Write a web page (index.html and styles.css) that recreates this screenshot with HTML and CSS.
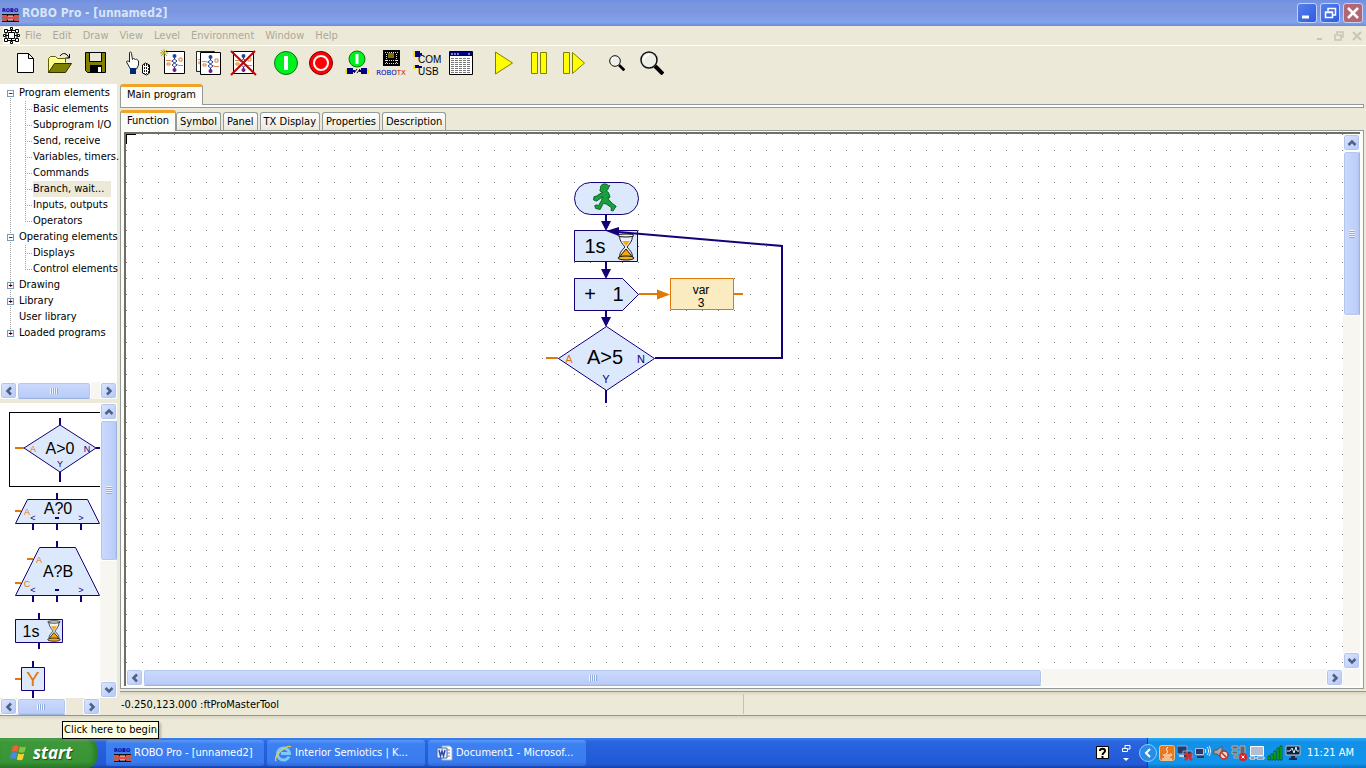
FILE: index.html
```html
<!DOCTYPE html>
<html lang="en">
<head>
<meta charset="utf-8">
<title>ROBO Pro - [unnamed2]</title>
<link rel="stylesheet" href="styles.css">
</head>
<body>
<svg class="defs" aria-hidden="true">
  <defs>
    <symbol id="robo" viewBox="0 0 17 17">
      <text x="0" y="7" class="robo-word">ROBO</text>
      <rect x="0" y="9" width="17" height="8" fill="#111"/>
      <path d="M0 11h4l3 3h3l3-3h4M0 15h4l3-3h3l3 3h4" fill="none" stroke="#e05048" stroke-width="2"/>
      <path d="M0 13h4M6 11h5M6 15h5M13 13h4" stroke="#f6d8d0"/>
    </symbol>
    <symbol id="page" viewBox="0 0 21 23">
      <path d="M.5 .5h20v22h-20z" fill="#fff" stroke="#000"/>
      <path d="M10.500 4v17" stroke="#101060"/>
      <circle cx="10.500" cy="5" r="2" fill="#204890"/>
      <path d="M8 10l2.500-2 2.500 2-2.500 2zM8 14l2.500-2 2.500 2-2.500 2z" fill="#fff" stroke="#2040a0"/>
      <path d="M2 9.500h4l2 1M13 13.500l2 1h4M15 7h3v3h-3zM3 12h3v2H3z" fill="none" stroke="#e08030"/>
      <circle cx="10.500" cy="19" r="2" fill="#702080"/>
    </symbol>
    <symbol id="plug" viewBox="0 0 24 8">
      <path d="M0 2h4v5H0zM20 2h4v5h-4z" fill="#ffe800"/>
      <path d="M2 1h6v2h2v2H8v2H2zM16 1h6v6h-6V5h-2V3h2z" fill="#000080"/>
      <path d="M9 6l3-4M12 6l3-4" stroke="#000"/>
    </symbol>
    <symbol id="glass" viewBox="0 0 20 28">
      <path d="M3.500 3c0 5 3 8 5.500 11-2.500 3-5.500 5-5.500 10h13c0-5-3-7-5.500-10 2.500-3 5.500-6 5.500-11z" fill="#eef3fa" stroke="#222"/>
      <path d="M6 8h8l-4 5z" fill="#f5a810"/>
      <path d="M10 16l5 6 1 3H4l1-3z" fill="#f5a810" stroke="#111"/>
      <ellipse cx="10" cy="2.500" rx="8" ry="1.500" fill="#eef3fa" stroke="#111"/>
      <ellipse cx="10" cy="25" rx="8" ry="2" fill="#f5b020" stroke="#111"/>
    </symbol>
    <symbol id="lens" viewBox="0 0 24 24">
      <path d="M15 15l8 8" stroke="#000" stroke-width="4"/>
      <circle cx="9" cy="9" r="8" fill="#efefe8" stroke="#111" stroke-width="1.500"/>
      <path d="M4 9a5 5 0 0 1 5-5" fill="none" stroke="#fff" stroke-width="2"/>
    </symbol>
    <symbol id="chev" viewBox="0 0 10 10">
      <path d="M1.500 7l3.500-3.500L8.500 7" fill="none" stroke="#4d6185" stroke-width="2.500"/>
    </symbol>
    <pattern id="grid" width="16" height="16" patternUnits="userSpaceOnUse">
      <rect x="0" y="0" width="1" height="1" fill="#777"/>
    </pattern>
  </defs>
</svg>

<header class="titlebar">
  <svg class="i17"><use href="#robo"/></svg>
  <h1>ROBO Pro - [unnamed2]</h1>
  <div class="winbtns">
    <button aria-label="Minimize"><svg viewBox="0 0 18 18"><path d="M4 13h7" stroke="#fff" stroke-width="3"/></svg></button>
    <button aria-label="Restore"><svg viewBox="0 0 18 18"><path d="M7 7V4.500h7.500V11H12M4.500 8.500h7v5h-7zM4 8h8" fill="none" stroke="#fff" stroke-width="1.500"/></svg></button>
    <button class="close" aria-label="Close"><svg viewBox="0 0 18 18"><path d="M4 4l10 10M14 4L4 14" stroke="#fff" stroke-width="2.500"/></svg></button>
  </div>
</header>

<nav class="menubar">
  <svg class="i17" viewBox="0 0 17 17"><path d="M0 0h17v17H0z" fill="#fff"/><path d="M5.500 5.500h6v6h-6zM3 3.500h11v10H3zM8.500 2v3M8.500 12v3M2 8.500h3M12 8.500h3" fill="none" stroke="#000"/><path d="M1.500 2.500h3v3h-3zM12.500 2.500h3v3h-3zM1.500 11.500h3v3h-3zM12.500 11.500h3v3h-3zM7.500 .5h2v2h-2zM7.500 14.500h2v2h-2zM.5 7.500h2v2h-2zM14.500 7.500h2v2h-2z" fill="#fff" stroke="#000"/></svg>
  <button>File</button><button>Edit</button><button>Draw</button><button>View</button><button>Level</button><button>Environment</button><button>Window</button><button>Help</button>
  <div class="mdibtns">
    <button aria-label="Minimize document"><svg viewBox="0 0 10 10"><path d="M1 8h5" stroke="#c9c5b4" stroke-width="2"/></svg></button>
    <button aria-label="Restore document"><svg viewBox="0 0 10 10"><path d="M3 3V1h6v5H7M1 4h6v5H1z" fill="none" stroke="#c9c5b4" stroke-width="1.500"/></svg></button>
    <button aria-label="Close document"><svg viewBox="0 0 10 10"><path d="M1 1l8 8M9 1L1 9" stroke="#c9c5b4" stroke-width="2"/></svg></button>
  </div>
</nav>

<div class="toolbar" role="toolbar">
  <div class="group">
    <button aria-label="New"><svg viewBox="0 0 30 30"><path d="M7.500 5.500h11l5 5v14h-16z" fill="#fff" stroke="#000"/><path d="M18.500 5.500v5h5" fill="none" stroke="#000"/></svg></button>
    <button aria-label="Open"><svg viewBox="0 0 30 30"><path d="M3.500 24.500v-14l2-2h5l2 2h8v4" fill="#ffff90" stroke="#606000"/><path d="M3.500 24.500l6-9h17l-6 9z" fill="#808000" stroke="#303000"/><path d="M15 8c3-4 7-3 9 2M20.500 10h4V6" fill="none" stroke="#000"/></svg></button>
    <button aria-label="Save"><svg viewBox="0 0 30 30"><path d="M5.500 4.500h20v20h-18l-2-2z" fill="#808000" stroke="#000"/><path d="M9.500 4.500h12v9h-12z" fill="#ece9d8" stroke="#000"/><path d="M10 17h12v8H10z" fill="#000"/><path d="M18 19h3v5h-3z" fill="#fff"/></svg></button>
  </div>
  <div class="group">
    <button aria-label="Hand tool"><svg viewBox="0 0 30 30"><path d="M6.500 4.500c1-1 2-.5 2 1l1 6 1-1 2 1 1-.5 2 2v4l-2 4h-6l-4-7c0-1 1.500-1.500 3 0z" fill="#fff" stroke="#222"/><path d="M7 20h6v6H7z" fill="#002878"/><path d="M19.500 17l3-2 4 2v8l-3 2-4-2z" fill="#fff" stroke="#000"/><path d="M21.500 16v10M23.500 16v10M25.500 17v8" stroke="#222" stroke-dasharray="2 1"/></svg></button>
    <button aria-label="New subprogram"><svg viewBox="0 0 30 30"><use href="#page" x="6" y="3" width="21" height="23"/><path d="M3 2l6 6M9 2L3 8M6 1v8M2 5h8" stroke="#b4a820"/></svg></button>
    <button aria-label="Copy subprogram"><svg viewBox="0 0 30 30"><use href="#page" x="3" y="3" width="19" height="21"/><use href="#page" x="7" y="4" width="21" height="23"/></svg></button>
    <button aria-label="Delete subprogram"><svg viewBox="0 0 30 30"><use href="#page" x="5" y="3" width="21" height="23"/><path d="M3 3l25 24M27 3L3 27" stroke="#b80808" stroke-width="2"/></svg></button>
  </div>
  <div class="group">
    <button aria-label="Start online"><svg viewBox="0 0 30 30"><circle cx="15" cy="15" r="11.500" fill="#00f020" stroke="#087808"/><path d="M15 8v14" stroke="#fff" stroke-width="4"/></svg></button>
    <button aria-label="Stop"><svg viewBox="0 0 30 30"><circle cx="15" cy="15" r="11.500" fill="#f00" stroke="#780000"/><circle cx="15" cy="15" r="7" fill="none" stroke="#fff" stroke-width="2"/></svg></button>
    <button aria-label="Download"><svg viewBox="0 0 30 30"><circle cx="16" cy="11" r="8" fill="#00f020" stroke="#087808"/><path d="M16 6v10" stroke="#fff" stroke-width="3"/><use href="#plug" x="4" y="19" width="24" height="8"/></svg></button>
    <button aria-label="ROBO TX"><svg viewBox="0 0 30 30"><path d="M7 2h17v16H7z"/><path d="M9 4.500h13M9 15.500h13M10.500 6v9M20.500 6v9M9 12.500h13" stroke="#ddd" stroke-dasharray="1 1"/><path d="M12 5h6v5h-6z" fill="#807000"/><text x="15" y="27" class="tx-word">ROBO<tspan fill="#d01010">TX</tspan></text></svg></button>
    <button aria-label="COM/USB"><svg viewBox="0 0 30 30"><path d="M2 3h3v6H2zM2 17h3v4H2z" fill="#ffe800"/><path d="M4 3h5v2h2v2H9v2H4zM4 17h4v1h3v2H4z" fill="#000080"/><text x="7" y="15" class="com-word">COM</text><text x="7" y="27" class="com-word">USB</text></svg></button>
    <button aria-label="Table"><svg viewBox="0 0 30 30"><path d="M3.500 3.500h23v23h-23z" fill="#fff" stroke="#000"/><path d="M4 4h22v4H4z" fill="#000080"/><path d="M5 6h9M22 6h3" stroke="#fff" stroke-dasharray="2 1"/><path d="M5 10.500h20M5 12.500h20M5 14.500h20M5 16.500h20M5 18.500h20M5 20.500h20M5 22.500h20M5 24.500h20" stroke="#777" stroke-dasharray="3 1"/></svg></button>
  </div>
  <div class="group">
    <button aria-label="Run"><svg viewBox="0 0 30 30"><path d="M6.500 4v22l17-11z" fill="#ff0" stroke="#808000"/></svg></button>
    <button aria-label="Pause"><svg viewBox="0 0 30 30"><path d="M7.500 4.500h6v21h-6zM16.500 4.500h6v21h-6z" fill="#ff0" stroke="#808000"/></svg></button>
    <button aria-label="Step"><svg viewBox="0 0 30 30"><path d="M4.500 4.500h6v21h-6zM13.500 4.500v21l12-10.500z" fill="#ff0" stroke="#808000"/></svg></button>
  </div>
  <div class="group">
    <button aria-label="Zoom out"><svg viewBox="0 0 30 30"><use href="#lens" x="7" y="7" width="16" height="16"/></svg></button>
    <button aria-label="Zoom in"><svg viewBox="0 0 30 30"><use href="#lens" x="3" y="3" width="24" height="24"/></svg></button>
  </div>
</div>

<main class="work">
  <aside class="side">
    <div class="treebox">
      <ul class="tree">
        <li><span class="row"><i class="box">−</i>Program elements</span>
          <ul>
            <li><span class="row">Basic elements</span></li>
            <li><span class="row">Subprogram I/O</span></li>
            <li><span class="row">Send, receive</span></li>
            <li><span class="row">Variables, timers.</span></li>
            <li><span class="row">Commands</span></li>
            <li><span class="row"><span class="sel">Branch, wait...</span></span></li>
            <li><span class="row">Inputs, outputs</span></li>
            <li><span class="row">Operators</span></li>
          </ul></li>
        <li><span class="row"><i class="box">−</i>Operating elements</span>
          <ul>
            <li><span class="row">Displays</span></li>
            <li><span class="row">Control elements</span></li>
          </ul></li>
        <li><span class="row"><i class="box">+</i>Drawing</span></li>
        <li><span class="row"><i class="box">+</i>Library</span></li>
        <li><span class="row"><i class="box none"></i>User library</span></li>
        <li><span class="row"><i class="box">+</i>Loaded programs</span></li>
      </ul>
      <div class="sb h">
        <button aria-label="Scroll left"><svg class="left"><use href="#chev"/></svg></button>
        <div class="track"><div class="thumb tree-thumb"></div></div>
        <button aria-label="Scroll right"><svg class="right"><use href="#chev"/></svg></button>
      </div>
    </div>
    <div class="palette">
      <svg class="shapes" viewBox="0 403 100 295" preserveAspectRatio="xMinYMin slice">
        <rect x="9.500" y="412.500" width="100" height="74" fill="none" stroke="#000"/>
        <g fill="#dce9fc" stroke="#140078" stroke-width="1">
          <path d="M60 425l36 23-36 24-36-24z"/>
          <path d="M27.500 499.500h60l12 24h-84z"/>
          <path d="M39.500 547.500h36l24 48h-84z"/>
          <path d="M15.500 619.500h47v23h-47zM21.500 667.500h23v23h-23z"/>
        </g>
        <path d="M60 418v7M60 472v10M96 448h4M57 493v6M33 524v6M57 524v6M81 524v6M57 541v6M33 596v6M57 596v6M81 596v6M39 613v6M39 643v6M33 661v6M33 691v7M55 518h4M55 590h4" stroke="#140078" stroke-width="2"/>
        <path d="M15 448h9M15 511h6M27 559h6M15 583h6M15 679h6" stroke="#e07808" stroke-width="2"/>
        <g class="big"><text x="60" y="454">A&gt;0</text><text x="58" y="514">A?0</text><text x="58" y="577">A?B</text><text x="31" y="637">1s</text></g>
        <g class="tiny or"><text x="33" y="452">A</text><text x="27" y="515">A</text><text x="39" y="563">A</text><text x="27" y="587">C</text></g>
        <g class="tiny"><text x="87" y="452">N</text><text x="60" y="467">Y</text><text x="33" y="521">&lt;</text><text x="81" y="521">&gt;</text><text x="33" y="593">&lt;</text><text x="81" y="593">&gt;</text></g>
        <text x="33" y="686" class="yy">Y</text>
        <use href="#glass" x="46" y="620" width="16" height="22"/>
      </svg>
      <div class="sb v">
        <button aria-label="Scroll up"><svg><use href="#chev"/></svg></button>
        <div class="track"><div class="thumb pal-thumb"></div></div>
        <button aria-label="Scroll down"><svg class="down"><use href="#chev"/></svg></button>
      </div>
    </div>
    <div class="sb h pal-h">
      <button aria-label="Scroll left"><svg class="left"><use href="#chev"/></svg></button>
      <div class="track"><div class="thumb palh-thumb"></div></div>
      <button aria-label="Scroll right"><svg class="right"><use href="#chev"/></svg></button>
    </div>
  </aside>

  <section class="doc">
    <div class="tabs main-tabs"><button class="tab active">Main program</button></div>
    <div class="strip"></div>
    <div class="tabs"><button class="tab active">Function</button><button class="tab">Symbol</button><button class="tab">Panel</button><button class="tab">TX Display</button><button class="tab">Properties</button><button class="tab">Description</button></div>
    <div class="frame">
      <div class="inner">
        <div class="sheet">
          <svg class="canvas">
            <rect width="100%" height="100%" fill="url(#grid)"/>
            <path d="M0 0h10v1H1v9H0z"/>
            <g transform="translate(-126 -134)">
              <g fill="#dce9fc" stroke="#140078">
                <rect x="574.500" y="182.500" width="64" height="32" rx="16"/>
                <path d="M574.500 230.500h63v31h-63zM574.500 278.500h48l16 16-16 16h-48zM606.500 326.500l48 32-48 32-48-32z"/>
              </g>
              <path d="M670.500 278.500h63v31h-63z" fill="#faebc0" stroke="#e07808"/>
              <path d="M606 215v8M606 262v8M606 311v8M606 390v13M655 358h127V246L618 232" fill="none" stroke="#140078" stroke-width="2"/>
              <path d="M601 221h10l-5 10zM601 269h10l-5 10zM601 317h10l-5 10zM606 231l13-4 0 9z" fill="#140078"/>
              <path d="M639 294h20M734 294h9M546 358h12" stroke="#e07808" stroke-width="2"/>
              <path d="M657 289.500l13 5-13 5z" fill="#e07808"/>
              <path transform="translate(572 180) scale(.32)" d="M89 21l5-7 8-2 8 2 4 4 4-1-3 6-2 1v5l-6 5 7 5 5 14-4 3-3-2 3 8 12 12 11 8-10 15-6-2 1-9-16-11-9-2-10 19-14-3-3-9 6-2 6 2 9-16 3-12-11 9-8 5-9-4 2-10 8-2 14-9 5-2-7-3-2-4 2-4v-4z" fill="#18a040" stroke="#086020" stroke-width="3"/>
              <use href="#glass" x="616" y="233" width="20" height="28"/>
              <g class="node"><text x="595" y="253">1s</text><text x="590" y="301">+</text><text x="618" y="301">1</text><text x="605" y="364">A&gt;5</text></g>
              <g class="var"><text x="701" y="294">var</text><text x="701" y="307">3</text></g>
              <g class="mark"><text x="641" y="363">N</text><text x="606" y="383">Y</text><text x="569" y="363" class="or">A</text></g>
            </g>
          </svg>
          <div class="sb v">
            <button aria-label="Scroll up"><svg><use href="#chev"/></svg></button>
            <div class="track"><div class="thumb doc-v"></div></div>
            <button aria-label="Scroll down"><svg class="down"><use href="#chev"/></svg></button>
          </div>
        </div>
        <div class="sb h doc-hbar">
          <button aria-label="Scroll left"><svg class="left"><use href="#chev"/></svg></button>
          <div class="track"><div class="thumb doc-h"></div></div>
          <button aria-label="Scroll right"><svg class="right"><use href="#chev"/></svg></button>
        </div>
      </div>
    </div>
    <div class="status"><span>-0.250,123.000 :ftProMasterTool</span><span></span></div>
  </section>
</main>
<div class="lower"><div class="tip" role="tooltip">Click here to begin</div></div>

<footer class="taskbar">
  <button class="start"><svg viewBox="0 0 18 18"><path d="M3 2c2-1 4-1 6 0L7.500 8c-2-1-4-1-6 0z" fill="#f06030"/><path d="M10 2.500c2 1 4 1 6 0L14.500 8c-2 1-4 1-6 0z" fill="#80c840"/><path d="M1.200 9c2-1 4-1 6 0l-1.500 6c-2-1-4-1-6 0z" fill="#4888f0"/><path d="M8.200 9.500c2 1 4 1 6 0l-1.500 6c-2 1-4 1-6 0z" fill="#f8d030"/></svg>start</button>
  <div class="tasks">
    <button class="task"><svg viewBox="0 0 17 17"><use href="#robo"/></svg>ROBO Pro - [unnamed2]</button>
    <button class="task"><svg viewBox="0 0 17 17"><path d="M14 11.500a6 6 0 1 1 .5-3H6" fill="none" stroke="#7cc8f8" stroke-width="3"/><path d="M1 16C-2 11 12-1 16 2" fill="none" stroke="#f0c840" stroke-width="1.500"/></svg>Interior Semiotics | K...</button>
    <button class="task"><svg viewBox="0 0 17 17"><path d="M6 1h8l2 2v12H6z" fill="#fff" stroke="#a0b0d0"/><path d="M8 5h6M8 8h6M8 11h6" stroke="#6080c0"/><path d="M1 3h10v10H1z" fill="#e8f0ff" stroke="#4868b0"/><path d="M3 5l1.500 6L6 6l1.500 5L9 5" fill="none" stroke="#2850a8" stroke-width="1.500"/></svg>Document1 - Microsof...</button>
  </div>
  <div class="quick">
    <svg viewBox="0 0 16 16"><path d="M1.500 1.500h12v12h-12z" fill="#ffffe1" stroke="#000"/><path d="M5 6c0-3 5-3 5 0 0 2-2.500 1.500-2.500 4M7.500 11v2" fill="none" stroke="#000" stroke-width="2"/></svg>
    <svg viewBox="0 0 16 20"><path d="M7 5V2.500h5V6h-2M4.500 5.500h5v3h-5z" fill="none" stroke="#fff"/><path d="M5 15h6l-3 3z" fill="#fff"/></svg>
  </div>
  <div class="tray">
    <button class="expand" aria-label="Show hidden icons"><svg viewBox="0 0 18 18"><circle cx="9" cy="9" r="8.500" fill="#2a8ce8" stroke="#8cd0ff"/><path d="M11 5L7 9l4 4" fill="none" stroke="#fff" stroke-width="2"/></svg></button>
    <svg viewBox="0 0 16 16"><rect x=".5" y=".5" width="15" height="15" rx="2" fill="#e87820" stroke="#f8c080"/><path d="M9 2c-4 3 2 4-2 7M4 10h7M5 12h6M3 14h10M11 9c3 0 2 2 0 2" fill="none" stroke="#fff"/></svg>
    <svg viewBox="0 0 16 16"><path d="M0 1h10v8H0zM6 6h9v7H6z" fill="#283868" stroke="#90a8d0"/><path d="M2 11h5" stroke="#c8d0e0" stroke-width="2"/><path d="M8 8l7 7M15 8l-7 7" stroke="#e02828" stroke-width="2.500"/></svg>
    <svg viewBox="0 0 16 16"><path d="M.5 3.500h8v6h-8z" fill="#283868" stroke="#b0c0e0"/><path d="M2 12h7" stroke="#283868" stroke-width="2"/><path d="M10 4c1 1 1 3 0 4M12 2c2 2 2 6 0 8M14 1c2 3 2 7 0 10" fill="none" stroke="#e8f4ff"/></svg>
    <svg viewBox="0 0 16 16"><path d="M1 5h3l5-4v12L4 9H1z" fill="#a8a8a8" stroke="#555"/><circle cx="11" cy="10" r="4" fill="#e8d8d0" stroke="#c03020" stroke-width="1.500"/><path d="M8 7l6 6" stroke="#c03020" stroke-width="1.500"/></svg>
    <svg viewBox="0 0 16 16"><path d="M1 1h6v3H1zM1 6h6v3H1zM3 11h5v2H3zM9 1h5v12H9z" fill="#606870" stroke="#a8b0b8"/><circle cx="12" cy="12" r="4" fill="#e02020"/><path d="M10.500 10.500l3 3M13.500 10.500l-3 3" stroke="#fff"/></svg>
    <svg viewBox="0 0 16 16"><path d="M1.500 1.500h13v9h-13z" fill="#b8bcd0" stroke="#fff"/><path d="M1 12h5v2H1zM8 12h7v2H8z" fill="#303858" stroke="#fff"/></svg>
    <svg viewBox="0 0 16 16"><path d="M1 11h2v4H1zM4 9h2v6H4zM7 6h2v9H7zM10 3h2v12h-2zM13 1h2v14h-2z" fill="#10c020" stroke="#004808" stroke-width=".7"/></svg>
    <svg viewBox="0 0 16 16"><path d="M1 1h14v9H1z" fill="#102038" stroke="#b0c0d0"/><path d="M2 6h3l2-3 2 5 2-6 1 4h2" fill="none" stroke="#e0f0ff"/><path d="M6 11h4v2h2v2H4v-2h2z" fill="#182848"/></svg>
    <time>11:21 AM</time>
  </div>
</footer>
</body>
</html>
```
FILE: styles.css
```css
* { box-sizing: border-box; }
body {
  margin: 0;
  min-height: 100vh;
  display: flex;
  flex-direction: column;
  background: #ece9d8;
  color: #000;
  font: 11px/16px "DejaVu Sans Condensed", "Noto Sans", sans-serif;
}
button { font: inherit; color: inherit; border: 0; padding: 0; margin: 0; background: none; white-space: nowrap; }
svg { display: block; flex: none; }
.defs { position: absolute; width: 0; height: 0; }
.i17 { width: 17px; height: 17px; }
.robo-word { font: bold 5px "DejaVu Sans", sans-serif; fill: #0000a8; }
.tx-word { font: 7px "DejaVu Sans", sans-serif; fill: #0000c0; text-anchor: middle; }
.com-word { font: 10px "Liberation Sans", sans-serif; }

.titlebar {
  height: 26px; display: flex; align-items: center; gap: 3px; padding: 0 3px 0 2px;
  background: linear-gradient(#6f8fe0, #7a96df 15%, #7b97e0 45%, #83a3ea 85%, #6c8ad8);
}
.titlebar h1 { margin: 0; font-size: 12px; font-weight: bold; color: #d8e4f8; }
.winbtns { margin-left: auto; display: flex; gap: 3px; }
.winbtns button { width: 20px; height: 20px; border: 1px solid #c4d2f6; border-radius: 3px; background: linear-gradient(135deg, #5880ec, #2c5be0); }
.winbtns .close { background: #b36674; }

.menubar { height: 20px; display: flex; align-items: center; padding-left: 3px; color: #aca899; border-bottom: 1px solid #fff; }
.menubar > button { padding: 0 6px 0 5px; }
.mdibtns { margin-left: auto; display: flex; gap: 8px; padding-right: 4px; }
.mdibtns svg { width: 10px; height: 10px; }

.toolbar { height: 38px; display: flex; gap: 8px; padding: 2px 7px; }
.group { display: flex; }
.group button { width: 35px; height: 30px; display: flex; justify-content: center; }
.group svg { width: 30px; height: 30px; }

.work { flex: 1; display: grid; grid-template-columns: 117px minmax(0, 1fr); column-gap: 3px; }
.side { display: flex; flex-direction: column; background: #fff; min-width: 0; }
.treebox { height: 315px; display: flex; flex-direction: column; justify-content: space-between; }
ul { list-style: none; margin: 0; padding: 0; }
.tree { padding-top: 1px; background: repeating-linear-gradient(#a0a0a0 0 1px, transparent 1px 2px) 10px 8px / 1px 240px no-repeat; }
.tree ul { margin-left: 25px; background: repeating-linear-gradient(#a0a0a0 0 1px, transparent 1px 2px) 0 0 / 1px calc(100% - 8px) no-repeat; }
.row { display: flex; align-items: center; height: 16px; white-space: nowrap; }
.tree > li > .row { padding-left: 7px; }
.tree ul .row::before { content: ""; flex: none; width: 7px; margin-right: 1px; border-top: 1px dotted #a0a0a0; }
.box { flex: none; width: 7px; height: 7px; border: 1px solid #7b9ab8; background: #fff; margin-right: 5px; font: bold 7px/5px "Liberation Sans", sans-serif; text-align: center; }
.box.none { border: 0; background: none; }
.sel { background: #ece9d8; padding-right: 7px; }

.sb { display: flex; background: #f7f6f1; }
.sb.h { height: 17px; }
.sb.v { width: 17px; flex-direction: column; }
.sb button { flex: none; width: 17px; height: 17px; border: 1px solid #fff; border-radius: 3px; background: linear-gradient(135deg, #dce6ff, #b4c8f6); box-shadow: inset 0 0 0 1px #b4c6f0; display: flex; align-items: center; justify-content: center; }
.sb svg { width: 10px; height: 10px; }
.left { transform: rotate(-90deg); }
.right { transform: rotate(90deg); }
.down { transform: rotate(180deg); }
.track { flex: 1; display: flex; }
.sb.v .track { flex-direction: column; }
.thumb { border: 1px solid #fff; border-radius: 3px; box-shadow: inset 0 0 0 1px #b4c6f0; display: flex; align-items: center; justify-content: center; }
.h .thumb { background: linear-gradient(#cbdafd, #b9cbf8); border-bottom-color: #9db6e0; }
.v .thumb { background: linear-gradient(90deg, #cbdafd, #b9cbf8); border-right-color: #9db6e0; }
.h .thumb::after { content: ""; width: 8px; height: 6px; background: repeating-linear-gradient(90deg, #eef4ff 0 1px, #8fabdf 1px 2px); }
.v .thumb::after { content: ""; width: 6px; height: 8px; background: repeating-linear-gradient(#eef4ff 0 1px, #8fabdf 1px 2px); }
.tree-thumb { width: 89%; }
.pal-thumb { height: 54%; }
.palh-thumb { width: 74%; }
.doc-v { height: 33%; }
.doc-h { width: 76%; }

.palette { flex: 1; display: flex; border-top: 4px solid #ece9d8; min-height: 299px; }
.shapes { flex: 1; width: 100px; height: 295px; min-width: 0; }
.pal-h { padding-right: 17px; background: #ece9d8; }
.big, .tiny, .yy, .node, .var, .mark { font-family: "Liberation Sans", Arial, sans-serif; text-anchor: middle; }
.big { font-size: 16px; }
.tiny { font-size: 9px; fill: #140078; }
.yy { font-size: 20px; fill: #e07808; }
.node { font-size: 20px; }
.var { font-size: 12px; }
.mark { font-size: 11px; fill: #140078; }
.or, .tiny.or { fill: #e07808; }

.doc { display: flex; flex-direction: column; min-width: 0; }
.tabs { display: flex; align-items: flex-end; height: 20px; }
.tab { height: 18px; padding: 0 3px; margin-right: 2px; border: 1px solid #919b9c; border-bottom: 0; border-radius: 3px 3px 0 0; background: linear-gradient(#fff, #ece9d8); }
.tab.active { position: relative; height: 21px; margin: 0 0 -1px; padding: 0 6px 2px; border-top: 3px solid #f0a428; background: #fbfbf8; }
.strip { height: 4px; margin: 0 2px 2px 0; border: 1px solid #919b9c; background: #fff; }
.frame { flex: 1; display: flex; margin-right: 2px; padding: 1px 3px 2px; border: 1px solid #919b9c; background: #fcfcfa; }
.inner { flex: 1; display: flex; flex-direction: column; border: 1px solid #716f64; border-width: 2px 0 0 2px; min-width: 0; }
.sheet { flex: 1; display: flex; background: #fff; }
.canvas { flex: 1; min-width: 0; height: auto; }
.doc-hbar { padding-right: 17px; }
.status { height: 24px; margin-top: 2px; display: grid; grid-template-columns: 1fr 1fr; align-items: center; border-top: 1px solid #919b8c; background: linear-gradient(#d8d5c4, #ece9d8 4px); }
.status span { height: 20px; line-height: 22px; padding-left: 1px; }
.status span + span { border-left: 1px solid #c5c2b0; }
.lower { position: relative; height: 23px; border-top: 1px solid #919b8c; background: linear-gradient(#d8d5c4, #ece9d8 4px); }
.tip { position: absolute; left: 62px; top: 5px; height: 18px; padding: 0 1px; line-height: 16px; border: 1px solid #000; background: #ffffe1; box-shadow: 2px 2px 2px #8888; white-space: nowrap; }

.taskbar { height: 30px; display: flex; color: #fff; background: linear-gradient(#3c80ee, #2a66e0 12%, #245edb 50%, #2259d4 88%, #1941a5); }
.start { width: 97px; display: flex; align-items: center; gap: 5px; padding-left: 10px; border-radius: 0 10px 10px 0; background: linear-gradient(#5cae58, #3c9838 15%, #389434 80%, #2a7428); font: italic bold 17px/28px "Open Sans", sans-serif; text-shadow: 1px 1px 1px #1c4c18; box-shadow: inset -3px 0 4px #2a7c28; }
.start svg { width: 18px; height: 18px; }
.tasks { flex: 1; display: flex; gap: 3px; padding: 2px 0 2px 9px; min-width: 0; }
.task { flex: 0 1 158px; display: flex; align-items: center; gap: 3px; padding: 0 8px; overflow: hidden; border-radius: 3px; background: linear-gradient(#5a9af8, #3c80f2 15%, #3a7cee 85%, #2f68d8); }
.task svg { width: 17px; height: 17px; }
.quick { display: flex; align-items: center; gap: 7px; padding-right: 13px; }
.quick svg { width: 16px; height: 20px; }
.tray { display: flex; align-items: center; gap: 2px; padding: 0 12px 0 0; border-left: 1px solid #0a3c90; background: linear-gradient(#28a8f4, #1290e8 15%, #1194ea 85%, #0c70c0); }
.tray svg { width: 16px; height: 16px; }
.tray .expand { margin-left: -9px; }
.tray .expand svg { width: 18px; height: 18px; }
.tray time { margin-left: 4px; }
```
